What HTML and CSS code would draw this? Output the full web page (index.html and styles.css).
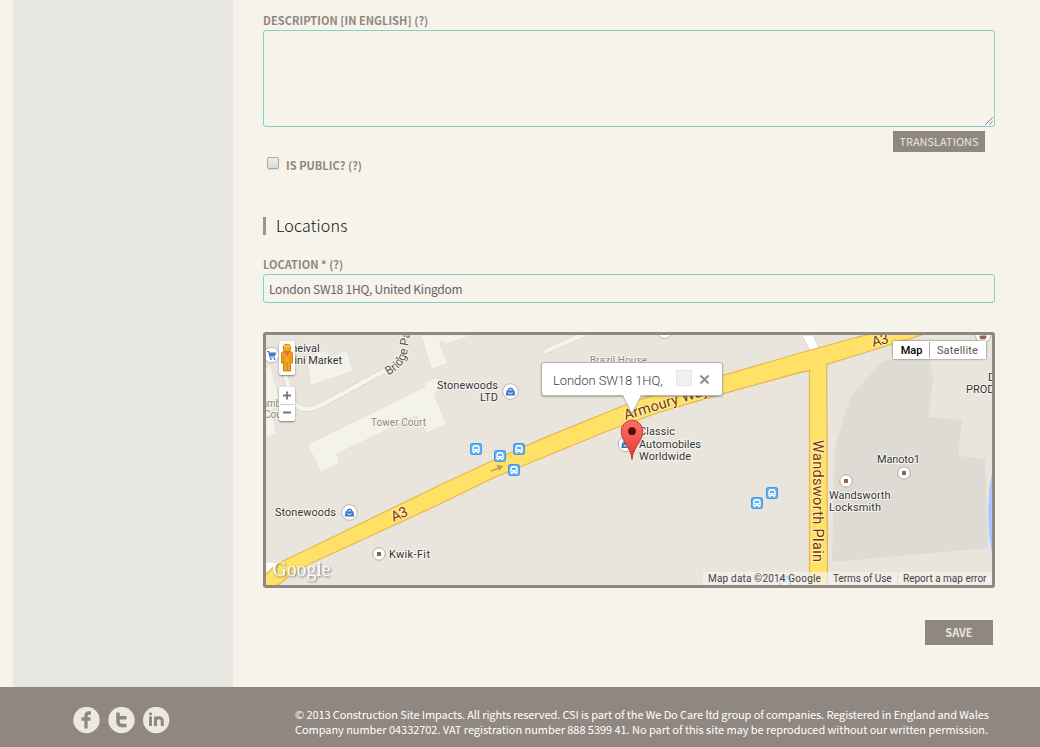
FILE: index.html
```html
<!DOCTYPE html>
<html lang="en">
<head>
<meta charset="utf-8">
<title>Construction Site Impacts</title>
<link rel="stylesheet" href="styles.css">
</head>
<body>
<div class="page">
  <aside class="sidebar"></aside>
  <main class="content">
    <label class="label" for="desc">DESCRIPTION [IN ENGLISH] (?)</label>
    <div class="area-wrap">
      <textarea class="area" id="desc"></textarea>
      <svg class="grip" width="8" height="8" viewBox="0 0 8 8"><path d="M.5 7.500l7-7M4.500 7.500l3-3" stroke="#444" fill="none" stroke-dasharray="1.2 .25"/></svg>
    </div>
    <div class="right"><button class="translations">TRANSLATIONS</button></div>
    <div class="check-row"><input class="check" id="pub" type="checkbox"><label class="check-label" for="pub">IS PUBLIC? (?)</label></div>
    <h2 class="heading"><span>Locations</span></h2>
    <label class="label loc-label" for="loc">LOCATION * (?)</label>
    <input class="field" id="loc" value="London SW18 1HQ, United Kingdom">
    <div class="map">
      <svg class="tiles" viewBox="266 335 726 250" width="726" height="250">
        <defs>
          <g id="bus"><rect x="-5.500" y="-5.500" width="11" height="11" rx="1.800" fill="#5cb1f8" stroke="#4796e0"/><path d="M-3.700 3V-1.500Q-3.300-4-1.500-4H1.500Q3.300-4 3.700-1.500V3H3V4.200H1.400V3H-1.400V4.200H-3V3Z" fill="#fff"/><path d="M-2.400 0L-1.900-2.300H1.900L2.400 0Z" fill="#5cb1f8"/><path d="M-2.600 1.500h1.200M1.400 1.500h1.200" stroke="#5cb1f8"/></g>
          <g id="shop"><circle r="7.800" fill="#fff" stroke="#b8b5b1"/><path d="M-4.700 4L-3.900-1.200H3.900L4.700 4Z" fill="#3f78cb"/><path d="M-2-1V-1.800Q-1.800-3.300 0-3.300T2-1.800V-1" fill="none" stroke="#3f78cb" stroke-width="1.500"/><path d="M-2.200 1.200Q0 2.900 2.200 1.200" fill="none" stroke="#fff"/></g>
          <g id="dot"><circle r="6.200" fill="#fff" stroke="#b1aca7"/><rect x="-2" y="-2" width="4" height="4" fill="#956443"/></g>
          <linearGradient id="pin" x1="0" y1="0" x2="0" y2="1"><stop offset="0" stop-color="#fb7166"/><stop offset="1" stop-color="#e23b33"/></linearGradient>
          <path id="bridge" d="M388 375.500Q406 366 407.500 350L412 322"/>
        </defs>
        <rect x="266" y="335" width="726" height="250" fill="#e9e5dd"/>
        <g fill="#f4f3eb" stroke="#e0ddd5" stroke-width=".6">
          <path d="M307.700 444.700L425 386.500 424 383 436.700 377.500 440 380 435 397 446.700 424.500 426 433 422 424 420 425 416.700 415.300 336.700 454 339.500 463 321 472Z"/>
          <path d="M421 335L431.700 369 448 363 439 343 443.500 341 446 344 473 335Z"/>
          <path d="M306 357L311 385.500 353 371 346.500 350.500 330 357 327 350Z"/>
          <path d="M266 368L270.500 365 279 400 272 410 276 434 266 437Z"/>
        </g>
        <path d="M384 371L325 403Q297 418 291 396L284 370M544 352L585 334" fill="none" stroke="#d9d5cc" stroke-width="6" stroke-linecap="round"/>
        <path d="M384 371L325 403Q297 418 291 396L284 370M544 352L585 334" fill="none" stroke="#f4f3ee" stroke-width="4.500" stroke-linecap="round"/>
        <path d="M894 359L882 362 851 396 837 440 835 450 832 562 988 548 985 459 958 456 962 420 928 417 933 378 928 356Z" fill="#dedad4"/>
        <path d="M992 472Q984.500 512 992 554Z" fill="#a4c6ff"/>
        <path d="M266 562L286 563 266 577Z" fill="#fff" stroke="#d5d0c8" stroke-width=".6"/>
        <path d="M801.500 335H813.500L820 352 812 354Z" fill="#fff" stroke="#d0ccc3" stroke-width=".7"/>
        <path d="M264 577Q273 565 287 559L327 540 440 485 493 460.500 540 439.700 620 407Q670 388 722 375.700L800 353 880 331H935L921.700 335 826.700 364.500 827.500 587H809.500V370.500L800 372.500 722 394 660 412 610 430 493 478 440 504 327 556Q295 569 276 587H262Z" fill="#ffe168" stroke="#e6b953" stroke-width="1.300"/>
        <path d="M491 471L501 467" stroke="#b9a653" stroke-width="1.500"/><path d="M496.500 464.800L503.500 466 499 471Z" fill="#b9a653"/>
        <g class="road">
          <text transform="translate(393.500 522) rotate(-24)" textLength="17">A3</text>
          <text transform="translate(873 347) rotate(-14)" textLength="17">A3</text>
          <text transform="translate(625.500 420) rotate(-17)" textLength="88">Armoury Way</text>
          <text transform="translate(813 440) rotate(90)" textLength="122">Wandsworth Plain</text>
        </g>
        <text class="minor"><textPath href="#bridge">Bridge Path</textPath></text>
        <g class="build">
          <text x="371" y="425.500" textLength="55">Tower Court</text>
          <text x="590" y="363.500" textLength="57">Brazil House</text>
          <text x="257" y="407" textLength="24">Lamb</text>
          <text x="264" y="418">Court</text>
        </g>
        <g class="poi">
          <text x="285.500" y="352">cheival</text>
          <text x="285" y="364" textLength="57">Mini Market</text>
          <text x="437" y="388.500" textLength="61">Stonewoods</text>
          <text x="480" y="400.500" textLength="18">LTD</text>
          <text x="275" y="516" textLength="61">Stonewoods</text>
          <text x="389" y="557.500" textLength="41">Kwik-Fit</text>
          <text x="639" y="435" textLength="36">Classic</text>
          <text x="639" y="447.500" textLength="62">Automobiles</text>
          <text x="639" y="459.500" textLength="52">Worldwide</text>
          <text x="877" y="463" textLength="43">Manoto1</text>
          <text x="829" y="498.500" textLength="61.500">Wandsworth</text>
          <text x="829" y="510.500" textLength="52">Locksmith</text>
          <text x="988" y="381">D</text>
          <text x="966" y="393">PROD</text>
        </g>
        <circle cx="271.500" cy="355" r="7.800" fill="#fff" stroke="#b8b5b1"/><path d="M267 351.500h1.800l1.200 5.500h5" fill="none" stroke="#3f78cb" stroke-width="1.200"/><path d="M269.500 352.500h6.800l-1.300 3.500h-5Z" fill="#3f78cb"/><circle cx="270.800" cy="359" r="1" fill="#3f78cb"/><circle cx="274.500" cy="359" r="1" fill="#3f78cb"/>
        <circle cx="664.500" cy="331" r="7.500" fill="#fff" stroke="#b8b5b1"/>
        <circle cx="983" cy="335.500" r="7.500" fill="#fff" stroke="#b8b5b1"/><path d="M979.500 335.500h7v1.500q0 2.200-2 2.200h-3q-2 0-2-2.200Z" fill="#956443"/>
        <use href="#shop" x="510.500" y="391.500"/><use href="#shop" x="349.500" y="512.500"/><use href="#shop" x="626" y="444"/>
        <use href="#dot" x="379" y="554"/><use href="#dot" x="846" y="481"/><use href="#dot" x="904" y="473"/>
        <use href="#bus" x="476" y="449"/><use href="#bus" x="500" y="456"/><use href="#bus" x="519" y="449"/><use href="#bus" x="514" y="470"/><use href="#bus" x="757" y="503"/><use href="#bus" x="772" y="493"/><use href="#bus" x="785" y="582"/>
        <path d="M632 459.500C630.500 446 621.200 442 621.200 431A10.800 10.800 0 0 1 642.800 431C642.800 442 633.500 446 632 459.500Z" fill="url(#pin)" stroke="#c0362d" stroke-width=".9"/><circle cx="632" cy="431.200" r="3.900" fill="#590d0b"/>
        <text class="google" x="272.500" y="575.500" textLength="58" lengthAdjust="spacingAndGlyphs">Google</text>
      </svg>
      <div class="pegman"><svg width="16" height="34" viewBox="0 0 16 34"><path d="M2.500 13Q2.500 10.500 5 10.500H11Q13.500 10.500 13.500 13V22H11.500V30H4.500V22H2.500Z" fill="#f3a81c" stroke="#c9800e"/><path d="M8 21V30M4.800 14V22M11.200 14V22" stroke="#c9800e" stroke-width=".8"/><path d="M4.500 11H11.500L8 15.500Z" fill="#ef6b50"/><circle cx="8" cy="7" r="3.800" fill="#f5ae20" stroke="#c9800e"/><path d="M5 5.500Q8 3.500 11 5.500" stroke="#ffd368" fill="none"/></svg></div>
      <div class="zoomer"><svg width="16" height="34" viewBox="0 0 16 34"><path d="M4 8.500H12M8 4.500V12.500M4 25.500H12" stroke="#777" stroke-width="1.800"/><path d="M1 17.500H15" stroke="#ccc"/></svg></div>
      <div class="info"><span class="info-text">London SW18 1HQ,</span><span class="info-box"></span><svg width="11" height="11" viewBox="0 0 11 11"><path d="M1.500 1.500L9.500 9.500M9.500 1.500L1.500 9.500" stroke="#8e8e8e" stroke-width="2"/></svg>
        <svg class="tail" width="20" height="21" viewBox="0 0 20 21"><path d="M.5 0L10 19.500 19.500 0" fill="#fff"/><path d="M.5 1.500L10 19.500 19.500 1.500" fill="none" stroke="#b0aca6" stroke-width=".8"/></svg>
      </div>
      <div class="types"><span class="type-map">Map</span><span class="type-sat">Satellite</span></div>
      <div class="credits"><span class="c1">Map data ©2014 Google</span><span class="c2">Terms of Use</span><span class="c3">Report a map error</span></div>
    </div>
    <div class="right"><button class="save">SAVE</button></div>
  </main>
</div>
<footer class="footer">
  <div class="social">
    <svg width="27" height="27" viewBox="0 0 27 27"><circle cx="13.500" cy="13" r="13.200" fill="#ece9e1"/><path d="M18 6H16Q13 6 13 9.300V21.500M8.500 12H17.500" stroke="#8f8780" stroke-width="3.300" fill="none"/></svg>
    <svg width="27" height="27" viewBox="0 0 27 27"><circle cx="13.500" cy="13" r="13.200" fill="#ece9e1"/><path d="M10 5.500V14.500Q10 18.500 14 18.500H18.500M9 10.700H18.500" stroke="#8f8780" stroke-width="3.500" fill="none"/></svg>
    <svg width="27" height="27" viewBox="0 0 27 27"><circle cx="13.200" cy="13" r="13.200" fill="#ece9e1"/><path d="M7.500 9.500V19M12.500 9.500V19M12.500 13.500Q13 10.700 16 10.700T19.300 14V19" stroke="#8f8780" stroke-width="3" fill="none"/><circle cx="7.500" cy="6.800" r="1.600" fill="#8f8780"/></svg>
  </div>
  <p class="legal"><span class="l1">© 2013 Construction Site Impacts. All rights reserved. CSI is part of the We Do Care ltd group of companies. Registered in England and Wales</span><br><span class="l2">Company number 04332702. VAT registration number 888 5399 41. No part of this site may be reproduced without our written permission.</span></p>
</footer>
</body>
</html>
```
FILE: styles.css
```css
* { box-sizing: border-box; }
body { margin: 0; width: 1040px; height: 747px; overflow: hidden; background: #f5f3ea; font-family: "Noto Sans CJK SC", "Open Sans", sans-serif; }
.page { display: flex; height: 687px; padding-left: 13px; }
.sidebar { width: 220px; background: #e7e6e1; }
.content { width: 732px; margin-left: 30px; padding-top: 12px; }
.label { display: block; height: 18px; line-height: 16px; font-size: 11px; font-weight: 700; letter-spacing: .05px; color: #8f8780; white-space: nowrap; }
.area-wrap { position: relative; height: 97px; }
.area { display: block; width: 732px; height: 97px; border: 1px solid #80d0cb; border-radius: 3px; background: transparent; resize: none; outline: 0; }
.grip { position: absolute; right: 2px; bottom: 2px; }
.right { display: flex; justify-content: flex-end; }
button { border: 0; padding: 0; border-radius: 0; background: #8f8780; color: #e7e6e1; font-family: inherit; }
.translations { width: 92px; height: 21px; margin: 4px 10px 0 0; font-size: 11px; line-height: 21px; }
.check-row { display: flex; height: 24px; margin-top: 4px; padding-left: 4px; }
.check { appearance: none; width: 12px; height: 12px; margin: 1px 7px 0 0; border: 1px solid #aaa9a7; border-radius: 2px; background: linear-gradient(#ededed, #dcdcdc); box-shadow: 0 1px 1px #ddd9d2; }
.check-label { font-size: 11px; font-weight: 700; line-height: 18px; letter-spacing: .05px; color: #8f8780; }
.heading { display: flex; align-items: center; height: 18px; margin: 37px 0 0; padding-left: 10px; border-left: 3px solid #9c948d; font-size: 16px; font-weight: 300; line-height: 16px; letter-spacing: .18px; color: #111; }
.heading span { padding-bottom: 2px; }
.loc-label { margin-top: 21px; }
.field { display: block; width: 732px; height: 29px; padding: 0 5px 1px; border: 1px solid #80d0cb; border-radius: 3px; background: transparent; font: 12px "Noto Sans CJK SC", sans-serif; letter-spacing: -.24px; color: #6b6169; outline: 0; }
.map { position: relative; width: 732px; height: 256px; margin-top: 29px; border: 3px solid #8f8780; border-radius: 3px; font-family: Roboto, sans-serif; overflow: hidden; }
.tiles { display: block; }
.tiles text { font-family: Roboto, sans-serif; paint-order: stroke; stroke: #f6f4ef; stroke-width: 2px; stroke-linejoin: round; }
.poi { font-size: 11px; fill: #333; }
.build { font-size: 10px; fill: #8f8778; }
.tiles .minor { font-size: 12px; fill: #5c564c; }
.road { font-size: 14.5px; fill: #74390a; }
.tiles .road text { stroke: #ffeeb0; }
.tiles .google { font: 22px "Liberation Serif", serif; fill: #fff; stroke: none; filter: drop-shadow(1px 1px 1px #777); }
.pegman, .zoomer { position: absolute; left: 13px; width: 16px; height: 34px; border-radius: 2px; background: #fff; box-shadow: 0 1px 2px #0007; }
.pegman { top: 6px; }
.zoomer { top: 52px; }
.info { position: absolute; left: 275px; top: 27px; width: 182px; height: 34px; display: flex; align-items: center; padding-left: 11px; border: 1px solid #b7b2ac; border-radius: 3px; background: #fff; box-shadow: 0 1px 2px #0004; }
.info-text { width: 123px; padding-top: 2px; font-size: 13px; font-weight: 300; letter-spacing: -.07px; color: #444; white-space: nowrap; }
.info-box { width: 16px; height: 16px; margin: 0 7px 2px 0; border: 1px solid #e3e3e3; background: #f1f1f1; }
.tail { position: absolute; left: 80px; top: 31px; }
.types { position: absolute; right: 6px; top: 6px; display: flex; width: 93px; height: 18px; border: 1px solid #fff; background: #fff; box-shadow: 0 0 2px #0009; font-size: 11px; line-height: 17px; text-align: center; color: #565656; }
.type-map { width: 36px; border-right: 1px solid #aaa; font-weight: 500; color: #000; }
.type-sat { flex: 1; letter-spacing: .2px; }
.credits { position: absolute; right: 0; bottom: 0; display: flex; width: 289px; height: 13px; background: #f5f3efb8; font-size: 10px; line-height: 13px; color: #444; white-space: nowrap; }
.credits span { padding-left: 5px; }
.c1 { width: 124px; letter-spacing: .2px; }
.c2 { width: 70px; border-left: 1px solid #e2dfda; letter-spacing: -.05px; }
.c3 { border-left: 1px solid #e2dfda; }
.save { width: 68px; height: 25px; margin: 32px 2px 0 0; font-size: 11px; font-weight: 700; line-height: 25px; }
.footer { display: flex; height: 60px; background: #8f8780; }
.social { display: flex; gap: 8px; width: 295px; padding: 20px 0 0 73px; }
.legal { margin: 20px 0 0; font-size: 11px; line-height: 15px; color: #fff; white-space: nowrap; }
.l1 { letter-spacing: -.108px; }
.l2 { letter-spacing: -.055px; }
```
